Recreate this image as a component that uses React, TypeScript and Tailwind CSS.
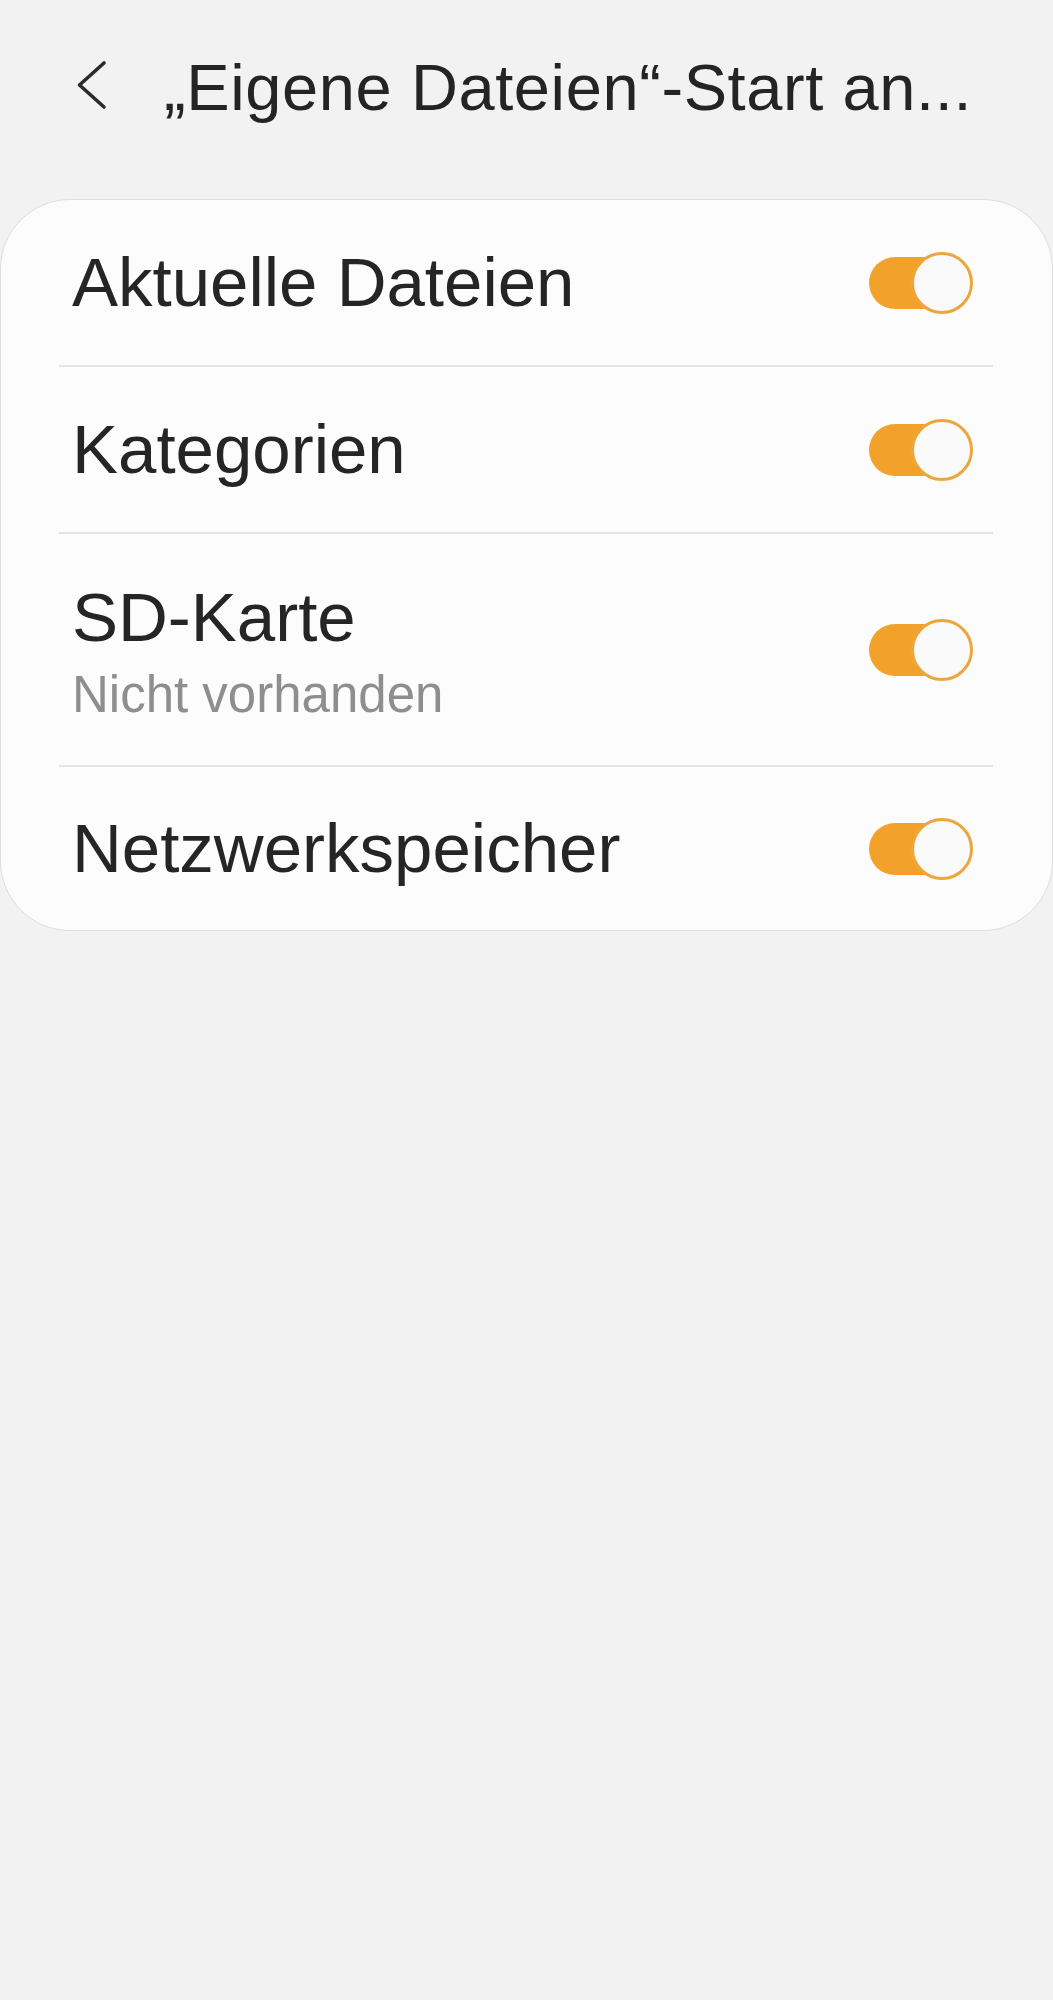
import React from 'react';

const font = { fontFamily: '"Liberation Sans", Arial, sans-serif' };

const Toggle: React.FC = () => (
  <div className="relative w-[104px] h-[62px] shrink-0">
    <div className="absolute left-0 top-[5px] w-[96px] h-[52px] rounded-full bg-[#f2a22a]" />
    <div className="absolute right-0 top-0 w-[62px] h-[62px] rounded-full bg-[#fafafa] border-[3px] border-[#eda63c]" />
  </div>
);

const Divider: React.FC = () => <div className="ml-[58px] mr-[59px] h-[2px] bg-[#e3e3e3]" />;

const rows = [
  { id: 'recent', title: 'Aktuelle Dateien', h: 'h-[165px]' },
  { id: 'cats', title: 'Kategorien', h: 'h-[165px]' },
  { id: 'sd', title: 'SD-Karte', sub: 'Nicht vorhanden', h: 'h-[231px]' },
  { id: 'nas', title: 'Netzwerkspeicher', h: 'h-[163px]' },
];

const App: React.FC = () => {
  return (
    <div className="min-h-[2000px] w-full bg-[#f2f2f2]" style={font}>
      {/* header */}
      <div className="flex items-center h-[166px] pl-[76px]">
        <svg width="32" height="52" viewBox="0 0 32 52" fill="none" className="shrink-0 mt-[4px]">
          <path d="M28 4 L3.5 26 L28 48" stroke="#2b2b2b" strokeWidth="3.6" strokeLinecap="round" strokeLinejoin="round" />
        </svg>
        <h1 className="ml-[56px] pt-[8px] text-[65px] leading-none tracking-[0.6px] text-[#242424] whitespace-nowrap font-normal">
          „Eigene Dateien“-Start an...
        </h1>
      </div>

      {/* settings card */}
      <div className="mt-[33px] bg-[#fcfcfc] border border-[#dedede] rounded-[70px]">
        {rows.map((row, i) => (
          <React.Fragment key={row.id}>
            {i > 0 && <Divider />}
            <div className={`flex items-center justify-between pl-[71px] pr-[79px] ${row.h}`}>
              {row.sub ? (
                <div className="pt-[9px]">
                  <div className="text-[69px] leading-[70px] text-[#252525]">{row.title}</div>
                  <div className="mt-[12px] text-[51px] leading-[60px] text-[#8e8e8e]">{row.sub}</div>
                </div>
              ) : (
                <div className="text-[69px] leading-[70px] text-[#252525]">{row.title}</div>
              )}
              <Toggle />
            </div>
          </React.Fragment>
        ))}
      </div>
    </div>
  );
};

export default App;
